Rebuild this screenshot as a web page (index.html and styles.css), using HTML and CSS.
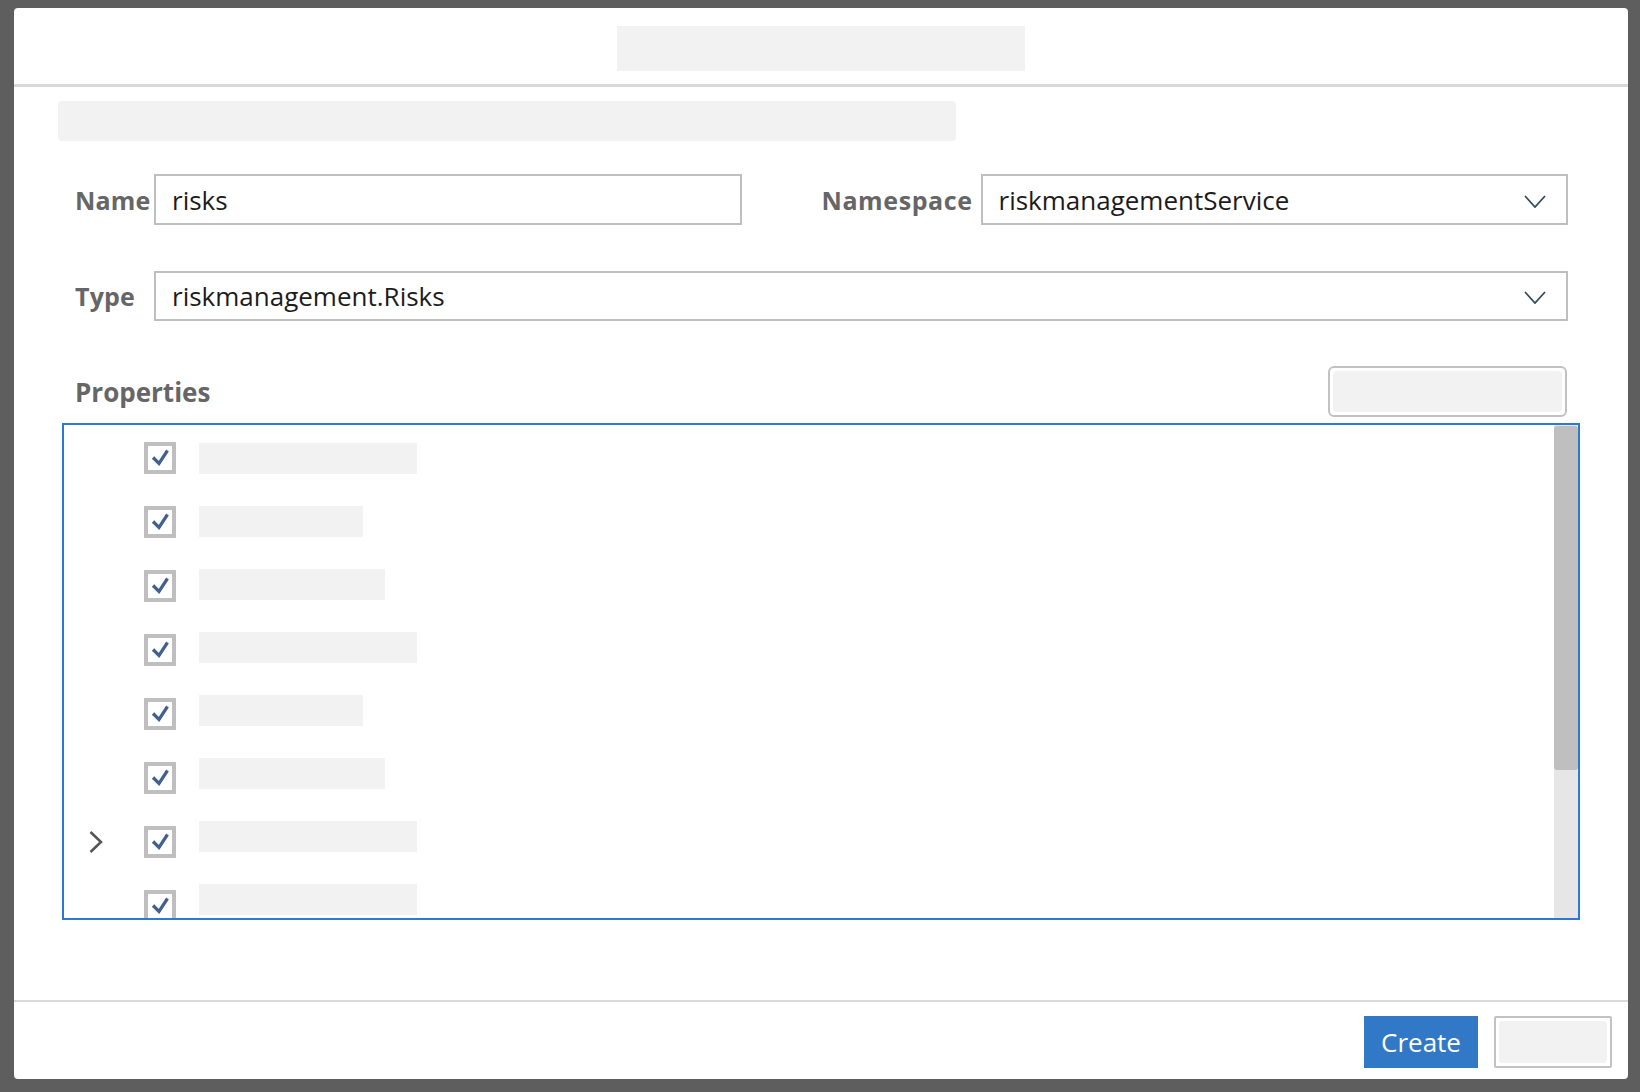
FILE: index.html
```html
<!DOCTYPE html>
<html lang="en">
<head>
<meta charset="utf-8">
<title>Create Entity</title>
<link rel="stylesheet" href="styles.css">
</head>
<body>
<div class="dialog">
  <div class="dlg-header">
    <div class="ph-title"></div>
  </div>
  <div class="dlg-main">
    <div class="ph-sub"></div>
    <div class="form-row row1">
      <label class="lbl lbl-first">Name</label>
      <div class="field">risks</div>
      <label class="lbl lbl-ns">Namespace</label>
      <div class="field select">
        <span class="val">riskmanagementService</span>
        <svg class="caret" width="22" height="13" viewBox="0 0 22 13"><path d="M1 1 L11 12 L21 1" fill="none" stroke="#354a5f" stroke-width="1.8"/></svg>
      </div>
    </div>
    <div class="form-row row2">
      <label class="lbl lbl-first">Type</label>
      <div class="field select">
        <span class="val">riskmanagement.Risks</span>
        <svg class="caret" width="22" height="13" viewBox="0 0 22 13"><path d="M1 1 L11 12 L21 1" fill="none" stroke="#354a5f" stroke-width="1.8"/></svg>
      </div>
    </div>
    <div class="props-row">
      <span class="props-lbl">Properties</span>
      <div class="ghost-btn props-btn"><div class="ghost-in"></div></div>
    </div>
    <div class="list">
      <div class="rows">
        <div class="row"><span class="exp"></span><span class="cb"><svg viewBox="0 0 24 24" width="24" height="24"><path d="M5 11.5 L11 17.5 L19.5 4.5" fill="none" stroke="#41618a" stroke-width="3.2"/></svg></span><span class="bar w1"></span></div>
        <div class="row"><span class="exp"></span><span class="cb"><svg viewBox="0 0 24 24" width="24" height="24"><path d="M5 11.5 L11 17.5 L19.5 4.5" fill="none" stroke="#41618a" stroke-width="3.2"/></svg></span><span class="bar w2"></span></div>
        <div class="row"><span class="exp"></span><span class="cb"><svg viewBox="0 0 24 24" width="24" height="24"><path d="M5 11.5 L11 17.5 L19.5 4.5" fill="none" stroke="#41618a" stroke-width="3.2"/></svg></span><span class="bar w3"></span></div>
        <div class="row"><span class="exp"></span><span class="cb"><svg viewBox="0 0 24 24" width="24" height="24"><path d="M5 11.5 L11 17.5 L19.5 4.5" fill="none" stroke="#41618a" stroke-width="3.2"/></svg></span><span class="bar w1"></span></div>
        <div class="row"><span class="exp"></span><span class="cb"><svg viewBox="0 0 24 24" width="24" height="24"><path d="M5 11.5 L11 17.5 L19.5 4.5" fill="none" stroke="#41618a" stroke-width="3.2"/></svg></span><span class="bar w2"></span></div>
        <div class="row"><span class="exp"></span><span class="cb"><svg viewBox="0 0 24 24" width="24" height="24"><path d="M5 11.5 L11 17.5 L19.5 4.5" fill="none" stroke="#41618a" stroke-width="3.2"/></svg></span><span class="bar w3"></span></div>
        <div class="row"><span class="exp"><svg width="14" height="22" viewBox="0 0 14 22"><path d="M1.5 1 L12 11 L1.5 21" fill="none" stroke="#555" stroke-width="2.5"/></svg></span><span class="cb"><svg viewBox="0 0 24 24" width="24" height="24"><path d="M5 11.5 L11 17.5 L19.5 4.5" fill="none" stroke="#41618a" stroke-width="3.2"/></svg></span><span class="bar w1"></span></div>
        <div class="row"><span class="exp"></span><span class="cb"><svg viewBox="0 0 24 24" width="24" height="24"><path d="M5 11.5 L11 17.5 L19.5 4.5" fill="none" stroke="#41618a" stroke-width="3.2"/></svg></span><span class="bar w1"></span></div>
      </div>
      <div class="scroll"><div class="thumb"></div></div>
    </div>
  </div>
  <div class="dlg-footer">
    <button class="btn-create">Create</button>
    <div class="ghost-btn cancel-btn"><div class="ghost-in"></div></div>
  </div>
</div>
</body>
</html>
```
FILE: styles.css
```css
* { box-sizing: border-box; }
html, body { margin: 0; }
body {
  width: 1640px;
  height: 1092px;
  background: #5e5e5e;
  padding: 8px 0 0 14px;
  font-family: "Open Sans", "Noto Sans", "Liberation Sans", sans-serif;
  overflow: hidden;
}
.dialog {
  width: 1614px;
  height: 1071px;
  background: #fff;
  border-radius: 4px;
  display: flex;
  flex-direction: column;
}
.dlg-header {
  height: 79px;
  flex: none;
  border-bottom: 3px solid #d9d9d9;
  display: flex;
  justify-content: center;
  align-items: flex-start;
  padding-top: 18px;
}
.ph-title {
  width: 408px;
  height: 45px;
  background: #f2f2f2;
}
.dlg-main {
  flex: 1;
  padding: 14px 48px 0 48px;
  display: flex;
  flex-direction: column;
}
.ph-sub {
  margin-left: -4px;
  width: 898px;
  height: 40px;
  background: #f2f2f2;
  border-radius: 4px;
}
.form-row {
  display: flex;
  align-items: center;
  padding: 0 12px 0 13px;
}
.row1 { margin-top: 33px; height: 51px; }
.row2 { margin-top: 46px; height: 50px; }
.lbl {
  font-weight: 700;
  font-size: 25px;
  color: #666;
  flex: none;
  letter-spacing: 0.2px;
}
.lbl-first { width: 79px; }
.lbl-ns { width: 159px; margin-left: 80px; letter-spacing: 0.6px; }
.field {
  flex: 1 1 0;
  min-width: 0;
  height: 100%;
  border: 2px solid #bfbfbf;
  display: flex;
  align-items: center;
  padding: 0 20px 0 16px;
  font-size: 26px;
  color: #1c1c1c;
}
.select { justify-content: space-between; }
.caret { flex: none; margin-top: 3px; }
.props-row {
  margin-top: 45px;
  height: 51px;
  display: flex;
  align-items: center;
  justify-content: space-between;
  padding: 0 13px 0 13px;
}
.props-lbl {
  font-weight: 700;
  font-size: 26px;
  color: #666;
}
.ghost-btn {
  border: 2px solid #c2c2c2;
  border-radius: 6px;
  padding: 3px;
  background: #fff;
}
.ghost-in {
  width: 100%;
  height: 100%;
  background: #f2f2f2;
  border-radius: 4px;
}
.props-btn { width: 239px; height: 51px; }
.list {
  margin-top: 6px;
  height: 497px;
  border: 2px solid #2d79d8;
  display: flex;
}
.rows {
  flex: 1;
  overflow: hidden;
  padding-top: 1px;
}
.row {
  height: 64px;
  display: flex;
  align-items: flex-start;
}
.exp {
  width: 80px;
  height: 64px;
  flex: none;
  padding-left: 25px;
  display: flex;
  align-items: center;
}
.exp svg { display: block; }
.cb {
  width: 32px;
  height: 32px;
  flex: none;
  margin-top: 16px;
  border: 4px solid #bfbfbf;
  background: #fff;
}
.cb svg { display: block; }
.bar {
  margin-left: 23px;
  height: 31px;
  background: #f2f2f2;
  margin-top: 17px;
}
.row:nth-child(2) .bar { margin-top: 16px; }
.row:nth-child(3) .bar { margin-top: 15px; }
.row:nth-child(4) .bar { margin-top: 14px; }
.row:nth-child(5) .bar { margin-top: 13px; }
.row:nth-child(6) .bar { margin-top: 12px; }
.row:nth-child(7) .bar { margin-top: 11px; }
.row:nth-child(8) .bar { margin-top: 10px; }
.w1 { width: 218px; }
.w2 { width: 164px; }
.w3 { width: 186px; }
.scroll {
  width: 24px;
  flex: none;
  background: #e6e6e6;
  padding-top: 1px;
}
.thumb {
  height: 344px;
  background: #bfbfbf;
  border-radius: 3px;
}
.dlg-footer {
  height: 79px;
  flex: none;
  border-top: 2px solid #d9d9d9;
  display: flex;
  justify-content: flex-end;
  align-items: flex-start;
  padding: 14px 16px 0 0;
  gap: 16px;
}
.btn-create {
  width: 114px;
  height: 52px;
  background: #3178c6;
  color: #fff;
  border: none;
  font-family: "Open Sans", "Noto Sans", "Liberation Sans", sans-serif;
  font-size: 26px;
  font-weight: 500;
  padding: 0;
}
.cancel-btn { width: 118px; height: 52px; border-radius: 2px; }
.cancel-btn .ghost-in { border-radius: 3px; }
```
